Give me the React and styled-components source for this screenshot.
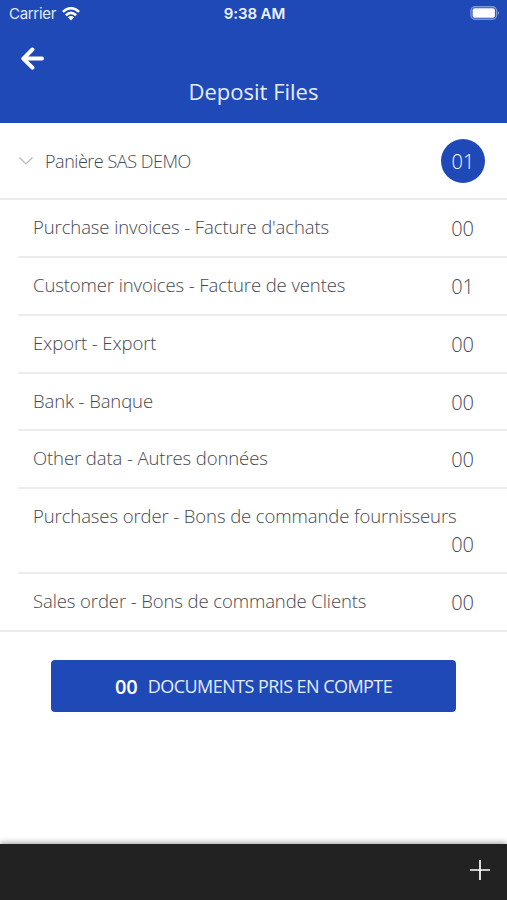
import React from 'react';
import styled, { createGlobalStyle } from 'styled-components';

const Global = createGlobalStyle`
  * { box-sizing: border-box; }
  body { margin: 0; background: #fff; font-family: 'Open Sans', sans-serif; font-weight: 300; color: #454852; }
`;
const Screen = styled.main`
  width: 507px; height: 900px; display: flex; flex-direction: column; overflow: hidden; background: #fff;
`;
const Header = styled.header`
  height: 123px; flex: none; background: #1f49b6; color: #fff; display: flex; flex-direction: column;
`;
const StatusBar = styled.div`
  height: 28px; display: grid; grid-template-columns: 1fr auto 1fr; align-items: center; padding: 0 7px 0 9px;
  font: 400 15px/28px Inter, sans-serif;
`;
const Carrier = styled.span`display: flex; align-items: center; gap: 6px; letter-spacing: -.3px; color: #e2eafb;`;
const Clock = styled.span`font-weight: 600; letter-spacing: -.1px; color: #eef3ff;`;
const Battery = styled.svg`justify-self: end; margin-top: -2px;`;
const BackButton = styled.button`
  width: 26px; height: 24px; margin: 19px 0 0 20px; padding: 0; border: 0; background: none; color: #fff; display: flex;
`;
const Title = styled.h1`
  margin: 3px 0 0; text-align: center; font-size: 22px; line-height: 34px; font-weight: 400; color: #e6edfc;
`;
const Company = styled.section`
  height: 77px; flex: none; display: flex; align-items: center; padding: 1px 22px 0 19px; border-bottom: 2px solid #ebecec; font-size: 18px;
`;
const CompanyName = styled.span`flex: 1; margin-left: 12px; letter-spacing: -.47px;`;
const CountBadge = styled.span`
  width: 44px; height: 44px; border-radius: 50%; background: #1f49b6; color: #fff; display: grid; place-items: center;
  font-size: 20px; line-height: 24px; padding-top: 2px;
`;
const List = styled.ul`
  margin: 0; padding: 0 0 0 18px; list-style: none; flex: none; border-bottom: 2px solid #ebecec;
`;
const Row = styled.li`
  height: ${p => p.$height}px; display: flex; flex-wrap: wrap; justify-content: space-between; align-content: flex-start;
  padding: 13px 33px 0 15px; border-bottom: 2px solid #ebecec; font-size: 18.5px; line-height: 28px;
  &:last-child { border-bottom: 0; }
`;
const Label = styled.span`flex: ${p => p.$full ? '0 0 100%' : '1'}; white-space: nowrap; letter-spacing: -.1px;`;
const Count = styled.span`margin-left: auto; font-size: 20px; padding-top: ${p => p.$wrapped ? 1 : 2}px; line-height: 28px;`;
const Submit = styled.button`
  width: 405px; height: 52px; margin: 28px 0 0 51px; padding: 0; flex: none; border: 0; border-radius: 4px; background: #1f49b6; color: #e6edfc;
  display: flex; justify-content: center; align-items: center; gap: 10px; font: 400 18px 'Open Sans', sans-serif; letter-spacing: -.56px;
`;
const SubmitCount = styled.span`font-size: 20px; font-weight: 600; letter-spacing: 0; color: #fff;`;
const Footer = styled.footer`
  height: 56px; margin-top: auto; flex: none; background: #222; color: #fff; display: flex; align-items: center; justify-content: flex-end;
  padding: 0 17px 4px 0; box-shadow: 0 -1px 6px #0006;
`;

const rows = [
  ["Purchase invoices - Facture d'achats", '00', 58],
  ['Customer invoices - Facture de ventes', '01', 58],
  ['Export - Export', '00', 58],
  ['Bank - Banque', '00', 57],
  ['Other data - Autres données', '00', 58],
  ['Purchases order - Bons de commande fournisseurs', '00', 85],
  ['Sales order - Bons de commande Clients', '00', 56],
];

export default function App() {
  return <><Global /><Screen>
    <Header>
      <StatusBar>
        <Carrier>Carrier
          <svg width="18" height="15" viewBox="0 0 18 15" fill="none" stroke="#fff" strokeWidth="2.6">
            <path d="M.9 4.9Q9-2.5 17.1 4.9M3.9 8.2Q9 3.7 14.1 8.2" /><path d="M5.9 10.2Q9 7.7 12.1 10.2L9 13.5Z" fill="#fff" stroke="none" />
          </svg>
        </Carrier>
        <Clock>9:38 AM</Clock>
        <Battery width="30" height="14" viewBox="0 0 30 14">
          <rect x="1" y=".7" width="25.5" height="12.6" rx="4" fill="none" stroke="#7e97d5" strokeWidth="1.4" />
          <rect x="2.6" y="2.3" width="22.3" height="9.4" rx="2" fill="#fff" /><path d="M27.8 5Q30.5 7 27.8 9Z" fill="#7e97d5" />
        </Battery>
      </StatusBar>
      <BackButton aria-label="Back"><svg width="26" height="24" viewBox="0 0 26 24" fill="none" stroke="currentColor" strokeWidth="4" strokeLinecap="round" strokeLinejoin="round"><path d="M12.4 2.5L3.3 11.6L12.4 20.7M3.5 11.6H22" /></svg></BackButton>
      <Title>Deposit Files</Title>
    </Header>
    <Company>
      <svg width="14" height="10" viewBox="0 0 14 10" fill="none" stroke="#b5b7ba" strokeWidth="1.2"><path d="M.5 1.5L7 8L13.5 1.5" /></svg>
      <CompanyName>Panière SAS DEMO</CompanyName><CountBadge>01</CountBadge>
    </Company>
    <List>{rows.map(([name, count, height]) => <Row key={name} $height={height}>
      <Label $full={height === 85}>{name}</Label><Count $wrapped={height === 85}>{count}</Count>
    </Row>)}</List>
    <Submit><SubmitCount>00</SubmitCount>DOCUMENTS PRIS EN COMPTE</Submit>
    <Footer><svg width="20" height="20" viewBox="0 0 20 20" stroke="currentColor" strokeWidth="1.7"><path d="M10 0V20M0 10H20" /></svg></Footer>
  </Screen></>;
}
